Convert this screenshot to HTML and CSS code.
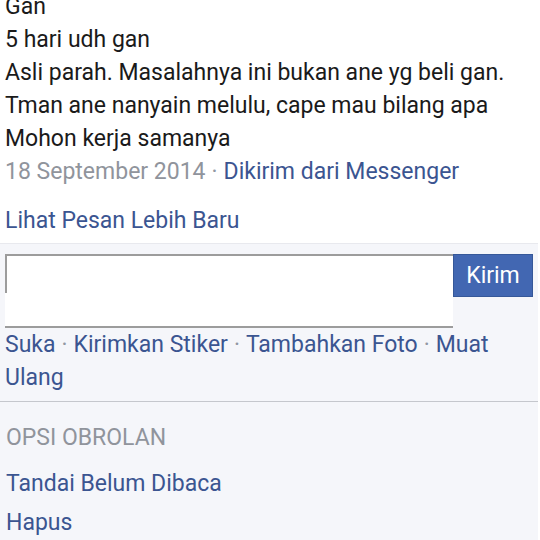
FILE: index.html
```html
<!DOCTYPE html>
<html lang="id">
<head>
<meta charset="utf-8">
<title>Pesan</title>
<link rel="stylesheet" href="styles.css">
</head>
<body>
<div class="page">
  <div class="thread">
    <div class="msg">Gan</div>
    <div class="msg">5 hari udh gan</div>
    <div class="msg">Asli parah. Masalahnya ini bukan ane yg beli gan.</div>
    <div class="msg">Tman ane nanyain melulu, cape mau bilang apa</div>
    <div class="msg">Mohon kerja samanya</div>
    <div class="meta"><span class="date">18 September 2014</span><span class="sep">·</span><a class="link">Dikirim dari Messenger</a></div>
    <div class="newer"><a class="link">Lihat Pesan Lebih Baru</a></div>
  </div>
  <div class="composer">
    <div class="input-row">
      <div class="textbox"><div class="edge"></div></div>
      <button class="send">Kirim</button>
    </div>
    <div class="actions"><a class="link">Suka</a><span class="sep">·</span><a class="link">Kirimkan Stiker</a><span class="sep">·</span><a class="link">Tambahkan Foto</a><span class="sep">·</span><a class="link">Muat Ulang</a></div>
  </div>
  <div class="options">
    <div class="opt-title">OPSI OBROLAN</div>
    <div class="opt"><a class="link">Tandai Belum Dibaca</a></div>
    <div class="opt"><a class="link">Hapus</a></div>
  </div>
</div>
</body>
</html>
```

FILE: styles.css
```css
html, body {
  margin: 0;
  padding: 0;
  background: #ffffff;
}
body {
  font-family: Roboto, "Noto Sans", "Liberation Sans", sans-serif;
  font-size: 23px;
  line-height: 33px;
  color: #1a1a1a;
  overflow: hidden;
}
.page {
  width: 538px;
}
.thread {
  margin-top: -10px;
  padding: 0 5px 6px 5px;
}
.link {
  color: #3b5591;
  text-decoration: none;
}
.date {
  color: #90949c;
}
.sep {
  color: #9197a3;
  margin: 0 6px;
}
.newer {
  margin-top: 16px;
}
.composer {
  background: #f5f6fa;
  border-top: 1px solid #e8e9ee;
  padding: 10px 0 7px 5px;
  border-bottom: 1px solid #c5c7cd;
}
.input-row {
  display: flex;
  align-items: flex-start;
}
.textbox {
  width: 448px;
  height: 70px;
  background: #ffffff;
  border-top: 2px solid #9c9c9c;
  border-bottom: 2px solid #9c9c9c;
}
.edge {
  width: 0;
  height: 37px;
  border-left: 2px solid #9c9c9c;
}
.send {
  width: 80px;
  height: 43px;
  margin: 0;
  padding: 0;
  background: #4267b2;
  border: 1px solid #365899;
  color: #ffffff;
  font-family: Roboto, "Noto Sans", "Liberation Sans", sans-serif;
  font-size: 23px;
  line-height: 33px;
}
.actions {
  padding-right: 20px;
}
.options {
  background: #f5f6fa;
  padding: 19px 6px 20px 6px;
}
.opt-title {
  color: #90949c;
  margin-bottom: 10px;
}
.opt {
  padding: 3px 0;
}
```
